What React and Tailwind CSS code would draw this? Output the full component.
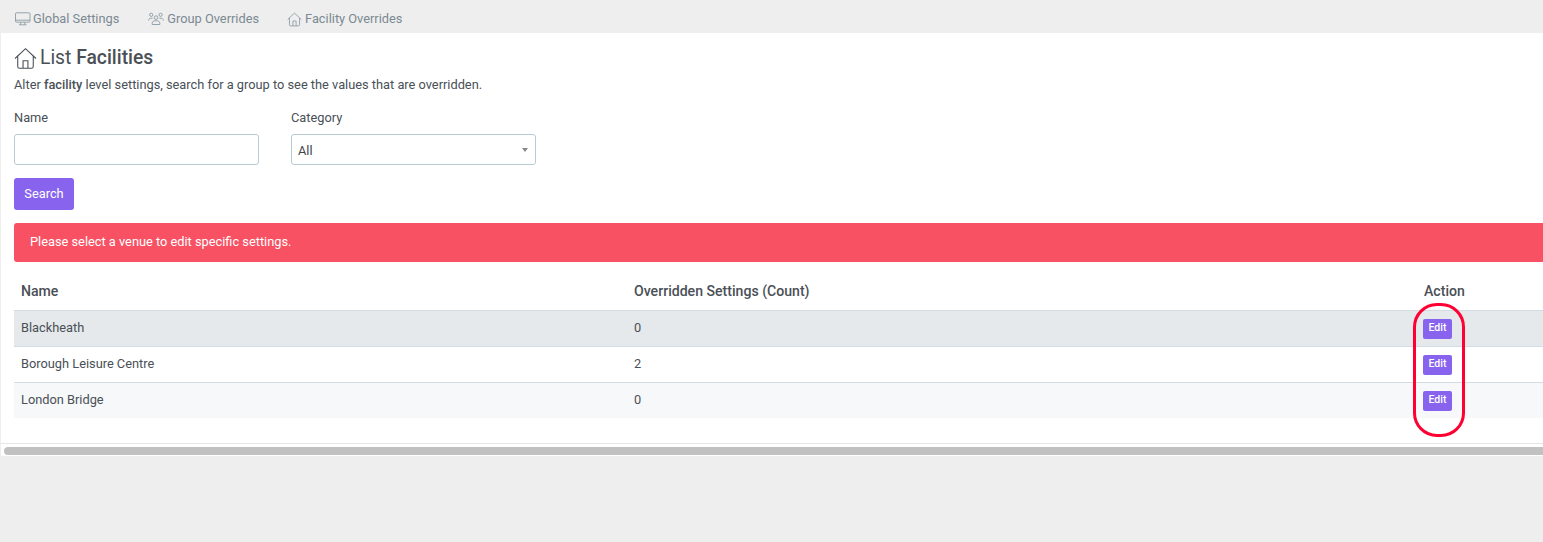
import React from "react";

const Monitor = () => (
  <svg width="16" height="14" viewBox="0 0 16 14" fill="none" stroke="#8a9ba3" strokeWidth="0.9" className="shrink-0">
    <rect x="0.5" y="0.8" width="14.5" height="9.4" rx="1.2" />
    <path d="M0.5 8.2H15M6 10.4L5.4 12.6M9.5 10.4L10.1 12.6M4 12.8H11.5" />
  </svg>
);
const Users = () => (
  <svg width="16" height="14" viewBox="0 0 16 14" fill="none" stroke="#8a9ba3" strokeWidth="0.9" className="shrink-0">
    <circle cx="3.2" cy="2.8" r="1.6" />
    <circle cx="12.6" cy="2.8" r="1.6" />
    <circle cx="8" cy="5.6" r="1.8" />
    <path d="M0.5 8.6C0.8 6.6 2 6 4.6 6.2M15.4 8.6C15.1 6.6 14 6 11.4 6.2M4.2 12.5V11.2C4.2 9.4 5.6 8.7 8 8.7C10.4 8.7 11.8 9.4 11.8 11.2V12.5Z" />
  </svg>
);
const Home = ({ size = 15, color = "#8a9ba3", sw = 0.9 }) => (
  <svg width={size} height={size} viewBox="0 0 16 16" fill="none" stroke={color} strokeWidth={sw} className="shrink-0">
    <path d="M0.7 8L8 1.2L15.3 8M2.6 6.4V13.6C2.6 14.4 3.1 14.8 3.8 14.8H12.2C12.9 14.8 13.4 14.4 13.4 13.6V6.4M6.3 14.8V9.6H9.7V14.8" />
  </svg>
);

const rows = [
  ["Blackheath", "0", "bg-[#e6e9ec]", "h-[36px] border-b"],
  ["Borough Leisure Centre", "2", "bg-white", "h-[36px] border-b"],
  ["London Bridge", "0", "bg-[#f7f8fa]", "h-[35px]"],
];

export default function App() {
  return (
    <div className="relative w-full h-[542px] overflow-hidden bg-[#eeeeee] text-[12.8px] text-[#495057] font-['Roboto',sans-serif]">
      <nav className="h-[33px] pt-[5px] flex items-center pl-[15px] gap-[29px] text-[#7b8a93]">
        <span className="flex items-center gap-[2px]"><Monitor />Global Settings</span>
        <span className="flex items-center gap-[3px]"><Users />Group Overrides</span>
        <span className="flex items-center gap-[3px] -ml-[1px]"><Home />Facility Overrides</span>
      </nav>
      <main className="ml-[1px] h-[423px] bg-white flex flex-col">
        <div className="flex-1 pl-[13px]">
          <h1 className="pt-[12px] h-[38px] flex items-center gap-[3px] text-[19.3px] leading-none text-[#4a5056]">
            <Home size={23} color="#495057" sw={0.75} />
            <span>List <span className="font-medium">Facilities</span></span>
          </h1>
          <p className="mt-[5px] leading-[18px]">Alter <span className="font-medium">facility</span> level settings, search for a group to see the values that are overridden.</p>
          <form className="mt-[15px] flex gap-[32px]">
            <div className="w-[245px]">
              <label className="block leading-[18px]">Name</label>
              <input className="mt-[7px] block w-full h-[31px] bg-white border border-[#b8cbd3] rounded-[3px]" />
            </div>
            <div className="w-[245px]">
              <label className="block leading-[18px]">Category</label>
              <div className="mt-[7px] relative flex items-center h-[31px] pt-[2px] px-[6px] border border-[#b8cbd3] rounded-[3px]">
                <span className="text-[#3f454b]">All</span>
                <span className="ml-auto mr-[1px] mb-[2px] w-0 h-0 border-x-[3px] border-x-transparent border-t-[4px] border-t-[#888888]" />
              </div>
            </div>
          </form>
          <button className="mt-[13px] block w-[60px] h-[32px] bg-[#8763ee] text-white rounded-[3px]">Search</button>
          <div className="mt-[13px] h-[39px] pb-[2px] flex items-center pl-[16px] bg-[#f85163] text-white rounded-l-[3px]">Please select a venue to edit specific settings.</div>
          <div className="mt-[11px] text-[14.1px] font-medium grid grid-cols-[613px_789px_1fr] h-[38px] items-center border-b border-[#d3dce3] text-[#4a5056]">
            <span className="pl-[7px]">Name</span>
            <span className="pl-[7px]">Overridden Settings (Count)</span>
            <span className="pl-[8px]">Action</span>
          </div>
          {rows.map(([name, count, bg, h]) => (
            <div key={name} className={`grid grid-cols-[613px_789px_1fr] items-center border-[#d3dce3] ${h} ${bg}`}>
              <span className="pl-[7px] pb-[2px]">{name}</span>
              <span className="pl-[7px] pb-[2px]">{count}</span>
              <span className="pl-[7px]">
                <button className="block w-[29px] h-[20px] bg-[#8763ee] text-white text-[10.5px] font-medium leading-[18px] pb-[2px] rounded-[2px]">Edit</button>
              </span>
            </div>
          ))}
        </div>
        <div className="h-[13px] border-t border-[#e6e6e6] pt-[3px] pl-[3px]">
          <div className="h-[8px] bg-[#c1c1c1] rounded-l-[4px]" />
        </div>
      </main>
      <div className="absolute left-[1413px] top-[303px] w-[52px] h-[134px] border-[3px] border-[#ff0033] rounded-[24px] pointer-events-none" />
    </div>
  );
}
